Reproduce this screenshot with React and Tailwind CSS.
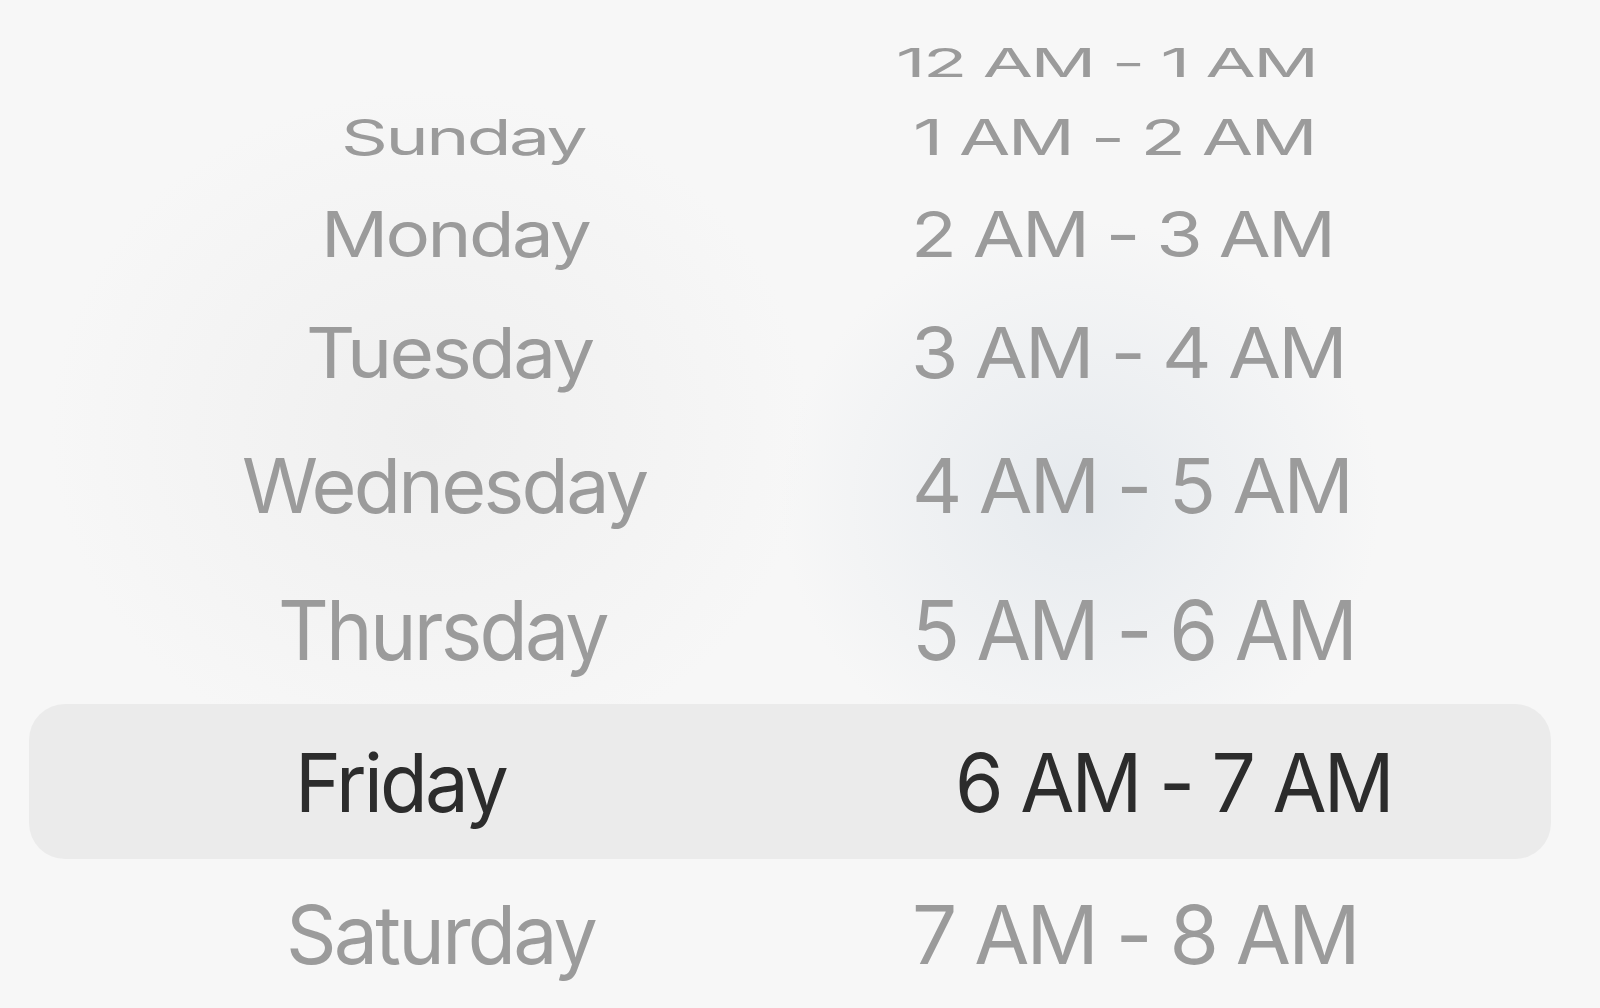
const rows = [
  { h: "h-[64px]", day: null, dayPad: "pl-[341px]", dayScale: "", time: "12 AM - 1 AM", timePad: "pl-[96px]", timeScale: "scale-x-[0.91] scale-y-[0.49]" },
  { h: "h-[84px]", day: "Sunday", dayPad: "pl-[341px]", dayScale: "scale-x-[0.915] scale-y-[0.62]", time: "1 AM - 2 AM", timePad: "pl-[113px]", timeScale: "scale-x-[0.93] scale-y-[0.62]" },
  { h: "h-[110px]", day: "Monday", dayPad: "pl-[321px]", dayScale: "scale-x-[0.93] scale-y-[0.79]", time: "2 AM - 3 AM", timePad: "pl-[111px]", timeScale: "scale-x-[0.94] scale-y-[0.79]" },
  { h: "h-[126px]", day: "Tuesday", dayPad: "pl-[306px]", dayScale: "scale-x-[0.955] scale-y-[0.88]", time: "3 AM - 4 AM", timePad: "pl-[111px]", timeScale: "scale-x-[0.96] scale-y-[0.88]" },
  { h: "h-[141px]", day: "Wednesday", dayPad: "pl-[242px]", dayScale: "scale-x-[0.965] scale-y-[0.945]", time: "4 AM - 5 AM", timePad: "pl-[112px]", timeScale: "scale-x-[0.973] scale-y-[0.945]" },
  { h: "h-[148px]", day: "Thursday", dayPad: "pl-[278px]", dayScale: "scale-x-[0.985] scale-y-[1.03]", time: "5 AM - 6 AM", timePad: "pl-[112px]", timeScale: "scale-x-[0.986] scale-y-[1.03]" },
];

const after = [
  { h: "h-[151px]", day: "Saturday", dayPad: "pl-[286px]", dayScale: "scale-x-[0.985] scale-y-[1.01]", time: "7 AM - 8 AM", timePad: "pl-[112px]", timeScale: "scale-y-[1.01]" },
];

function Row({ r }) {
  return (
    <div className={`flex items-center shrink-0 ${r.h}`}>
      <div className={`w-[800px] shrink-0 ${r.dayPad}`}>
        {r.day && (
          <span className={`inline-block origin-left leading-none ${r.dayScale}`}>{r.day}</span>
        )}
      </div>
      <div className={r.timePad}>
        <span className={`inline-block origin-left leading-none whitespace-nowrap ${r.timeScale}`}>{r.time}</span>
      </div>
    </div>
  );
}

export default function App() {
  return (
    <div className="h-[1008px] w-full overflow-hidden bg-[#f7f7f7] bg-[image:radial-gradient(ellipse_300px_280px_at_1080px_500px,#e6eaee,transparent),radial-gradient(ellipse_380px_340px_at_430px_430px,#efefef,transparent)] font-[Inter,sans-serif] text-[80px] tracking-[-0.035em] text-[#9b9b9b]">
      <div className="flex flex-col pt-[31px]">
        {rows.map((r, i) => (
          <Row key={i} r={r} />
        ))}

        {/* selected row */}
        <div className="ml-[29px] flex h-[155px] w-[1522px] shrink-0 items-center rounded-[36px] bg-[#ebebeb] pt-[2px] text-[#2c2c2c]">
          <div className="w-[771px] shrink-0 pl-[266px]">
            <span className="inline-block origin-left leading-none scale-x-[0.975] scale-y-[1.01]">Friday</span>
          </div>
          <div className="pl-[155px]">
            <span className="inline-block origin-left leading-none whitespace-nowrap scale-x-[0.98] scale-y-[1.01]">6 AM - 7 AM</span>
          </div>
        </div>

        {after.map((r, i) => (
          <Row key={i} r={r} />
        ))}
      </div>
    </div>
  );
}
